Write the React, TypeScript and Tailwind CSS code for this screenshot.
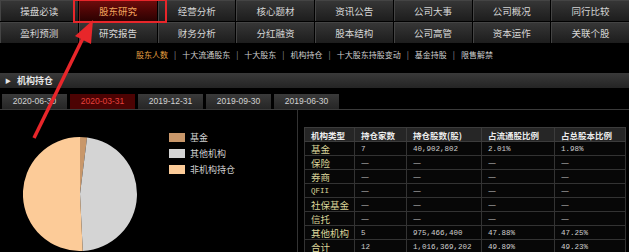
import React from "react";

const cjk = "font-['Noto_Sans_CJK_SC','Noto_Sans',sans-serif]";

const navRows = [
  ["操盘必读", "股东研究", "经营分析", "核心题材", "资讯公告", "公司大事", "公司概况", "同行比较"],
  ["盈利预测", "研究报告", "财务分析", "分红融资", "股本结构", "公司高管", "资本运作", "关联个股"],
];

const subNav = ["股东人数", "十大流通股东", "十大股东", "机构持仓", "十大股东持股变动", "基金持股", "限售解禁"];

const dates = ["2020-06-30", "2020-03-31", "2019-12-31", "2019-09-30", "2019-06-30"];

const headers = ["机构类型", "持仓家数", "持仓股数(股)", "占流通股比例", "占总股本比例"];

const rows = [
  ["基金", "7", "40,902,802", "2.01%", "1.98%"],
  ["保险", "—", "—", "—", "—"],
  ["券商", "—", "—", "—", "—"],
  ["QFII", "—", "—", "—", "—"],
  ["社保基金", "—", "—", "—", "—"],
  ["信托", "—", "—", "—", "—"],
  ["其他机构", "5", "975,466,400", "47.88%", "47.25%"],
  ["合计", "12", "1,016,369,202", "49.89%", "49.23%"],
];

const legend = [
  { label: "基金", color: "bg-[#c8976a]" },
  { label: "其他机构", color: "bg-[#d4d4d4]" },
  { label: "非机构持仓", color: "bg-[#fccb98]" },
];

function Pie() {
  return (
    <svg width="114" height="114" viewBox="0 0 114 114">
      <path d="M57 57 L57 0 A57 57 0 0 1 64.07 0.44 Z" fill="#c8976a" />
      <path d="M57 57 L64.07 0.44 A57 57 0 0 1 59.75 113.93 Z" fill="#d4d4d4" />
      <path d="M57 57 L59.75 113.93 A57 57 0 1 1 57 0 Z" fill="#fccb98" />
    </svg>
  );
}

export default function App() {
  return (
    <div className={`relative w-[629px] h-[252px] overflow-hidden bg-black ${cjk}`}>
      {/* top nav */}
      <div className="grid grid-cols-8 gap-[1px] bg-black">
        {navRows.flat().map((item) => {
          const active = item === "股东研究";
          return (
            <div
              key={item}
              className={`h-[21px] flex items-center justify-center text-[9.5px] border-t border-l ${
                active
                  ? "bg-gradient-to-b from-[#6e0c0c] to-[#2c0202] text-[#f2a45c] border-[#7a1a1a]"
                  : "bg-gradient-to-b from-[#363636] to-[#1d1d1d] text-[#d6d6d6] border-[#444]"
              }`}
            >
              {item}
            </div>
          );
        })}
      </div>

      {/* sub nav */}
      <div className="h-[30px] pt-[7px] flex justify-center text-[8px] leading-[10px]">
        {subNav.map((item, i) => (
          <React.Fragment key={item}>
            {i > 0 && <span className="mx-[6px] text-[#9a9a9a]">|</span>}
            <span className={i === 0 ? "text-[#e8a040]" : "text-[#cfcfcf]"}>{item}</span>
          </React.Fragment>
        ))}
      </div>

      {/* section bar */}
      <div className="h-[15px] flex items-center bg-gradient-to-b from-[#3a3a3a] to-[#242424]">
        <span className="ml-[5px] text-[6px] text-[#e6e6e6]">▶</span>
        <span className="ml-[6px] text-[9px] font-bold text-[#e6e6e6]">机构持仓</span>
      </div>

      {/* date tabs */}
      <div className="mt-[6px] flex gap-[3px] pl-[2px] border-b border-[#3a3a3a] font-['Liberation_Sans',sans-serif]">
        {dates.map((d) => {
          const active = d === "2020-03-31";
          return (
            <div
              key={d}
              className={`w-[65px] h-[15px] flex items-center justify-center text-[8.5px] ${
                active
                  ? "bg-[#4c0303] text-[#e6413c]"
                  : "bg-gradient-to-b from-[#3a3a3a] to-[#262626] text-[#d2d2d2]"
              }`}
            >
              {d}
            </div>
          );
        })}
      </div>

      {/* content */}
      <div className="flex h-[142px]">
        <div className="w-[298px] shrink-0 border-r border-[#333] flex items-start">
          <div className="ml-[23px] mt-[27px]">
            <Pie />
          </div>
          <div className="ml-[32px] mt-[23px] flex flex-col gap-[7px]">
            {legend.map((l) => (
              <div key={l.label} className="flex items-center h-[9px]">
                <span className={`w-[16px] h-[9px] ${l.color}`} />
                <span className="ml-[5px] text-[9px] leading-[9px] text-[#d0d0d0]">{l.label}</span>
              </div>
            ))}
          </div>
        </div>

        <div className="flex-1">
          <table className="ml-[6px] mt-[17px] w-[321px] table-fixed border-collapse">
            <colgroup>
              <col className="w-[50px]" />
              <col className="w-[52px]" />
              <col className="w-[75px]" />
              <col className="w-[73px]" />
              <col className="w-[71px]" />
            </colgroup>
            <thead>
              <tr className="h-[14px] bg-[#262626]">
                {headers.map((h) => (
                  <th
                    key={h}
                    className="border border-[#3c3c3c] pl-[6px] text-left text-[8.5px] leading-[12px] font-bold text-[#ececec] whitespace-nowrap overflow-hidden"
                  >
                    {h}
                  </th>
                ))}
              </tr>
            </thead>
            <tbody>
              {rows.map((r) => (
                <tr key={r[0]} className="h-[14px] bg-[#070707]">
                  {r.map((c, i) => (
                    <td
                      key={i}
                      className={`border border-[#333] pl-[6px] leading-[12px] whitespace-nowrap overflow-hidden ${
                        i === 0
                          ? c === "QFII"
                            ? "text-[7.5px] text-[#dcd69a] font-['Liberation_Mono',monospace]"
                            : "text-[9.5px] text-[#dcd69a]"
                          : c === "—"
                          ? "text-[9px] text-[#bdbdbd]"
                          : "text-[7.5px] text-[#cfcfcf] font-['Liberation_Mono',monospace]"
                      }`}
                    >
                      {c}
                    </td>
                  ))}
                </tr>
              ))}
            </tbody>
          </table>
        </div>
      </div>

      {/* annotation: red box + arrow */}
      <div className="absolute left-[73px] top-[-1px] w-[94px] h-[24px] border-[2.5px] border-[#e8262a] pointer-events-none" />
      <svg className="absolute left-0 top-0 pointer-events-none" width="629" height="252">
        <line x1="34" y1="138" x2="84" y2="36" stroke="#e8262a" strokeWidth="3.5" />
        <polygon points="93,20 75,36 91,44" fill="#e8262a" />
      </svg>
    </div>
  );
}
